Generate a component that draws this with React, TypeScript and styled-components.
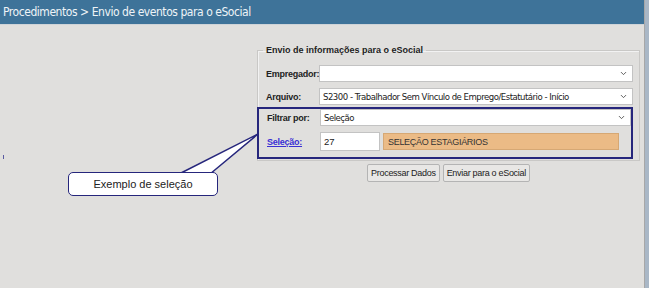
import styled, { createGlobalStyle } from 'styled-components';
import { ChevronDown } from 'lucide-react';

const GlobalStyle = createGlobalStyle`
  body {
    margin: 0;
    background: #e0dfdd;
    font-family: "Liberation Sans", Arial, sans-serif;
  }
`;

const Select = (props: { value?: string; narrow?: boolean }) => {
  const { value, narrow } = props;
  return (
    <SelectBox narrow={narrow}>
      <span>{value}</span>
      <ChevronDown size={9} strokeWidth={2.5} color='#555' />
    </SelectBox>
  );
};

const App = () => {
  return (
    <Page>
      <GlobalStyle />
      <Main>
        <Header>Procedimentos &gt; Envio de eventos para o eSocial</Header>
        <Content>
          <Form>
            <Legend>Envio de informações para o eSocial</Legend>
            <Row>
              <Label>Empregador:</Label>
              <Select />
            </Row>
            <Row>
              <Label>Arquivo:</Label>
              <Select value='S2300 - Trabalhador Sem Vínculo de Emprego/Estatutário - Início' />
            </Row>
            <Highlight>
              <Row>
                <Label>Filtrar por:</Label>
                <Select value='Seleção' narrow />
              </Row>
              <Row>
                <LinkLabel href='#'>Seleção:</LinkLabel>
                <CodeInput>27</CodeInput>
                <SelectionName>SELEÇÃO ESTAGIÁRIOS</SelectionName>
              </Row>
            </Highlight>
          </Form>
          <Buttons>
            <Button>Processar Dados</Button>
            <Button>Enviar para o eSocial</Button>
          </Buttons>
          <Callout>
            <svg className='tail' width='80' height='42' viewBox='0 0 80 42'>
              <polygon points='0,41 79,1 31,41' fill='#fff' stroke='#26267c' strokeWidth='1.5' strokeLinejoin='round' />
            </svg>
            <CalloutBox>Exemplo de seleção</CalloutBox>
          </Callout>
          <EdgeMark />
        </Content>
      </Main>
      <SideStrip />
    </Page>
  );
};

const Page = styled.div`
  width: 649px;
  height: 288px;
  display: flex;
  overflow: hidden;
`;

const Main = styled.div`
  flex: 1;
  display: flex;
  flex-direction: column;
  border-right: 1px solid #a7a7a7;
`;

const SideStrip = styled.div`
  width: 4px;
  background: #a9b7c6;
`;

const Header = styled.div`
  height: 24px;
  line-height: 24px;
  padding-left: 3px;
  background: #3e7399;
  color: #eef3f7;
  font-family: "DejaVu Sans Condensed", "DejaVu Sans", sans-serif;
  font-size: 12px;
  letter-spacing: -0.45px;
  border-bottom: 1px solid #cfd4d8;
`;

const Content = styled.div`
  position: relative;
  flex: 1;
  padding: 20px 0 0 257px;
`;

const Form = styled.fieldset`
  box-sizing: border-box;
  width: 383px;
  margin: 0;
  padding: 10px 0 0 0;
  border: 1px solid #c9c8c6;
  box-shadow: inset 1px 1px 0 #f2f2f2;
  display: flex;
  flex-direction: column;
  gap: 6px;
`;

const Legend = styled.legend`
  margin-left: 5px;
  padding: 0 3px;
  font-size: 9px;
  font-weight: bold;
  color: #222;
`;

const Row = styled.div`
  display: flex;
  align-items: center;
  gap: 3px;
`;

const Label = styled.div`
  flex-shrink: 0;
  width: 50px;
  padding-left: 8px;
  font-size: 9px;
  letter-spacing: -0.25px;
  font-weight: bold;
  color: #222;
  white-space: nowrap;
`;

const LinkLabel = styled.a`
  flex-shrink: 0;
  width: 50px;
  padding-left: 8px;
  font-size: 9px;
  letter-spacing: -0.25px;
  font-weight: bold;
  color: #3a2fd4;
  text-decoration: underline;
`;

const SelectBox = styled.div<{ narrow?: boolean }>`
  box-sizing: border-box;
  width: ${props => (props.narrow ? '312px' : '314px')};
  height: 17px;
  padding: 0 4px 0 3px;
  display: flex;
  align-items: center;
  justify-content: space-between;
  background: #fff;
  border: 1px solid #c3c3c3;
  font-family: "DejaVu Sans Condensed", "DejaVu Sans", sans-serif;
  font-size: 9.5px;
  letter-spacing: -0.5px;
  color: #222;
  white-space: nowrap;
`;

const Highlight = styled.div`
  margin: -4px 0 1px -1px;
  width: 376px;
  box-sizing: border-box;
  border: 2px solid #26267c;
  padding: 0 0 6px 0;
  display: flex;
  flex-direction: column;
  gap: 6px;
`;

const CodeInput = styled.div`
  box-sizing: border-box;
  width: 60px;
  height: 19px;
  padding: 0 3px;
  display: flex;
  align-items: center;
  background: #fff;
  border: 1px solid #c3c3c3;
  font-size: 9.5px;
  color: #222;
`;

const SelectionName = styled.div`
  box-sizing: border-box;
  width: 236px;
  height: 17px;
  padding: 0 4px;
  display: flex;
  align-items: center;
  background: #ebbb86;
  border: 1px solid #d6a874;
  font-size: 9px;
  letter-spacing: -0.3px;
  color: #333;
`;

const Buttons = styled.div`
  width: 383px;
  display: flex;
  justify-content: center;
  gap: 3px;
  margin-top: 3px;
`;

const Button = styled.button`
  height: 18px;
  padding: 0 3px;
  background: #e8e7e5;
  border: 1px solid #b4b4b4;
  border-radius: 2px;
  font-family: "Liberation Sans", Arial, sans-serif;
  font-size: 9px;
  letter-spacing: -0.3px;
  color: #222;
`;

const Callout = styled.div`
  position: absolute;
  left: 68px;
  top: 147px;

  .tail {
    position: absolute;
    left: 111px;
    top: -39px;
    overflow: visible;
  }
`;

const CalloutBox = styled.div`
  position: relative;
  box-sizing: border-box;
  width: 150px;
  height: 24px;
  display: flex;
  align-items: center;
  justify-content: center;
  background: #fff;
  border: 1.5px solid #26267c;
  border-radius: 5px;
  font-size: 11px;
  color: #222;
`;

const EdgeMark = styled.div`
  position: absolute;
  left: 3px;
  top: 130px;
  width: 1px;
  height: 4px;
  background: #5a5aa0;
`;

export default App;
